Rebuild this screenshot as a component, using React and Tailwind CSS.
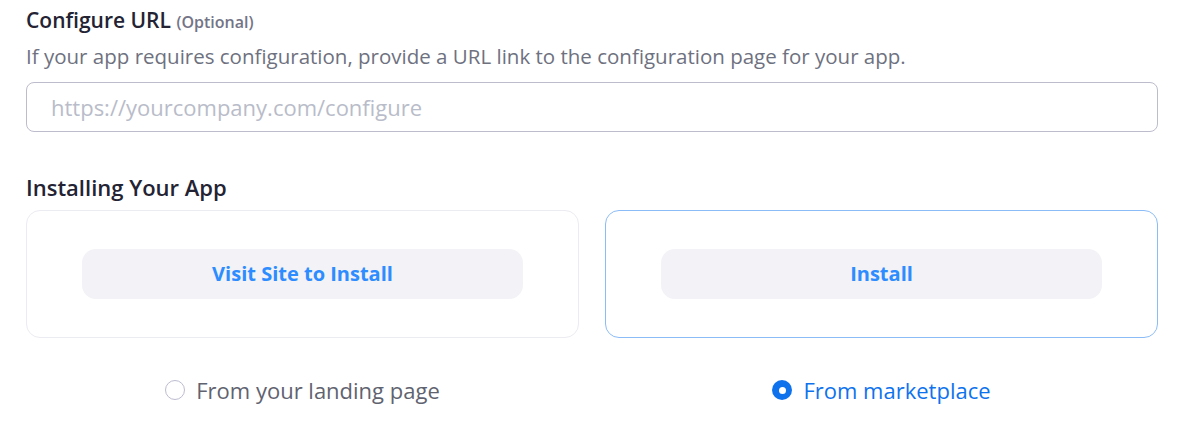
import React, { useState } from 'react'

const OPTIONS = [
  { id: 'landing', button: 'Visit Site to Install', label: 'From your landing page' },
  { id: 'marketplace', button: 'Install', label: 'From marketplace' },
]

export default function App() {
  const [selected, setSelected] = useState('marketplace')
  const [url, setUrl] = useState('')

  return (
    <div className="w-[1200px] h-[448px] bg-white pl-[26px] pr-[42px] pt-[6px] font-['Open_Sans',sans-serif] antialiased">
      <h2 className="text-[21px] leading-[28px] font-semibold text-[#232333]">
        Configure URL <span className="text-[16px] font-semibold text-[#747487]">(Optional)</span>
      </h2>
      <p className="mt-[8px] text-[20.5px] leading-[24px] text-[#6e7180]">
        If your app requires configuration, provide a URL link to the configuration page for your app.
      </p>
      <input
        type="text"
        value={url}
        onChange={(e) => setUrl(e.target.value)}
        placeholder="https://yourcompany.com/configure"
        className="mt-[14px] block w-full h-[50px] rounded-[8px] border border-[#bcbccc] px-[24px] text-[22px] text-[#232333] placeholder:text-[#b9bcc9] focus:outline-none"
      />

      <h2 className="mt-[41px] text-[22px] leading-[28px] font-semibold text-[#232333]">Installing Your App</h2>

      <div className="mt-[9px] grid grid-cols-2 gap-[26px]">
        {OPTIONS.map((o) => {
          const active = selected === o.id
          return (
            <div key={o.id} className="flex flex-col items-center">
              <div
                onClick={() => setSelected(o.id)}
                className={`w-full h-[128px] rounded-[14px] border flex items-center justify-center px-[55px] cursor-pointer ${
                  active ? 'border-[#8cbcf7]' : 'border-[#ebebf2]'
                }`}
              >
                <button className="w-full h-[50px] rounded-[14px] bg-[#f2f2f7] text-[20px] font-bold text-[#2d8cff]">
                  {o.button}
                </button>
              </div>
              <label
                onClick={() => setSelected(o.id)}
                className="mt-[38px] flex items-center gap-[11px] cursor-pointer"
              >
                {active ? (
                  <span className="w-[20px] h-[20px] rounded-full bg-[#0e72ed] flex items-center justify-center">
                    <span className="w-[7px] h-[7px] rounded-full bg-white" />
                  </span>
                ) : (
                  <span className="w-[20px] h-[20px] rounded-full border-[1.5px] border-[#bcbcd0] bg-white" />
                )}
                <span className={`text-[22px] leading-[28px] ${active ? 'text-[#0e72ed]' : 'text-[#5f6370]'}`}>
                  {o.label}
                </span>
              </label>
            </div>
          )
        })}
      </div>
    </div>
  )
}
